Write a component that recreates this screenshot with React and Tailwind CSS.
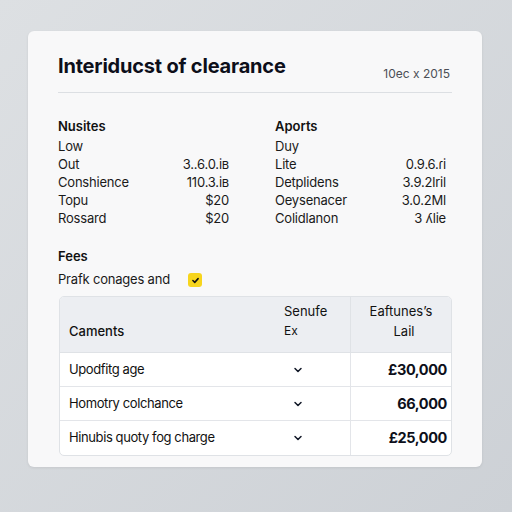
import React from "react";

const Chevron = () => (
  <svg width="12" height="12" viewBox="0 0 24 24" fill="none" stroke="#111827" strokeWidth="3" strokeLinecap="round" strokeLinejoin="round">
    <path d="M6 9l6 6 6-6" />
  </svg>
);

function KV({ title, rows }) {
  return (
    <div className="flex flex-col">
      <div className="text-[13px] font-semibold text-[#111] h-[20px] leading-[20px]">{title}</div>
      <div className="flex flex-col mt-[1px]">
        {rows.map(([k, v], i) => (
          <div key={i} className="flex justify-between h-[18px] leading-[18px] text-[13px] text-[#1a1a1a] tracking-[-0.2px]">
            <span>{k}</span>
            <span>{v}</span>
          </div>
        ))}
      </div>
    </div>
  );
}

export default function App() {
  const rows = [
    ["Upodfitg age", "£30,000"],
    ["Homotry colchance", "66,000"],
    ["Hinubis quoty fog charge", "£25,000"],
  ];
  return (
    <div
      className="w-[512px] h-[512px] bg-gradient-to-br from-[#dde0e3] to-[#cdd1d6] pt-[31px] pl-[28px]"
      style={{ fontFamily: "Inter, 'Liberation Sans', sans-serif" }}
    >
      <div className="w-[454px] h-[436px] bg-[#f8f8f9] rounded-[6px] shadow-[0_1px_3px_rgba(0,0,0,0.08)] pl-[30px] pr-[30px] pt-[22px]">
        <div className="flex justify-between items-end pb-[13px] border-b border-[#dcdfe3]">
          <div className="text-[20px] font-bold text-[#0d0f1a] leading-[26px] tracking-[-0.2px]">Interiducst of clearance</div>
          <div className="text-[12px] text-[#4b4f56] leading-[18px] mr-[2px] mb-[-4px]">10ec x 2015</div>
        </div>
        <div className="grid grid-cols-2 gap-x-[46px] mt-[23px] pr-[6px]">
          <KV
            title="Nusites"
            rows={[["Low", ""], ["Out", "3..6.0.iʙ"], ["Conshience", "110.3.iʙ"], ["Topu", "$20"], ["Rossard", "$20"]]}
          />
          <KV
            title="Aports"
            rows={[["Duy", ""], ["Lite", "0.9.6.ɾi"], ["Detplidens", "3.9.2lril"], ["Oeysenacer", "3.0.2Ml"], ["Colidlanon", "3 ʎlie"]]}
          />
        </div>
        <div className="mt-[19px] text-[13px] font-semibold text-[#111] leading-[20px]">Fees</div>
        <div className="flex items-center h-[26px] mt-[1px]">
          <span className="text-[13px] text-[#1a1a1a] w-[130px] tracking-[-0.2px]">Prafk conages and</span>
          <span className="w-[14px] h-[14px] rounded-[3px] bg-[#f7d51d] flex items-center justify-center">
            <svg width="9" height="9" viewBox="0 0 24 24" fill="none" stroke="#111" strokeWidth="4" strokeLinecap="round" strokeLinejoin="round">
              <path d="M5 12l5 5 9-10" />
            </svg>
          </span>
        </div>
        <div className="mt-[3px] ml-[1px] border border-[#dfe2e6] rounded-[5px] overflow-hidden bg-white">
          <div className="grid grid-cols-[224px_66px_1fr] bg-[#eceef2] h-[56px] border-b border-[#dfe2e6]">
            <div className="flex items-end pl-[9px] pb-[11px] text-[13px] font-medium text-[#111]">Caments</div>
            <div className="flex flex-col justify-end pb-[11px] text-[13px] text-[#111] leading-[20px]">
              <span>Senufe</span>
              <span className="text-[12px]">Ex</span>
            </div>
            <div className="flex flex-col items-center justify-end pb-[11px] text-[13px] text-[#111] leading-[20px] border-l border-[#dfe2e6]">
              <span>Eaftunes’s</span>
              <span className="ml-[6px]">Lail</span>
            </div>
          </div>
          {rows.map(([k, v], i) => (
            <div key={i} className={"grid grid-cols-[224px_66px_1fr] h-[34px] items-center " + (i < 2 ? "border-b border-[#e3e5e9]" : "")}>
              <div className="pl-[9px] text-[13px] text-[#111] tracking-[-0.4px]">{k}</div>
              <div className="pl-[8px] flex items-center"><Chevron /></div>
              <div className="h-full flex items-center justify-end pr-[4px] border-l border-[#e3e5e9] text-[14.5px] font-bold text-[#0d0f1a] tracking-[-0.4px]">{v}</div>
            </div>
          ))}
        </div>
      </div>
    </div>
  );
}
